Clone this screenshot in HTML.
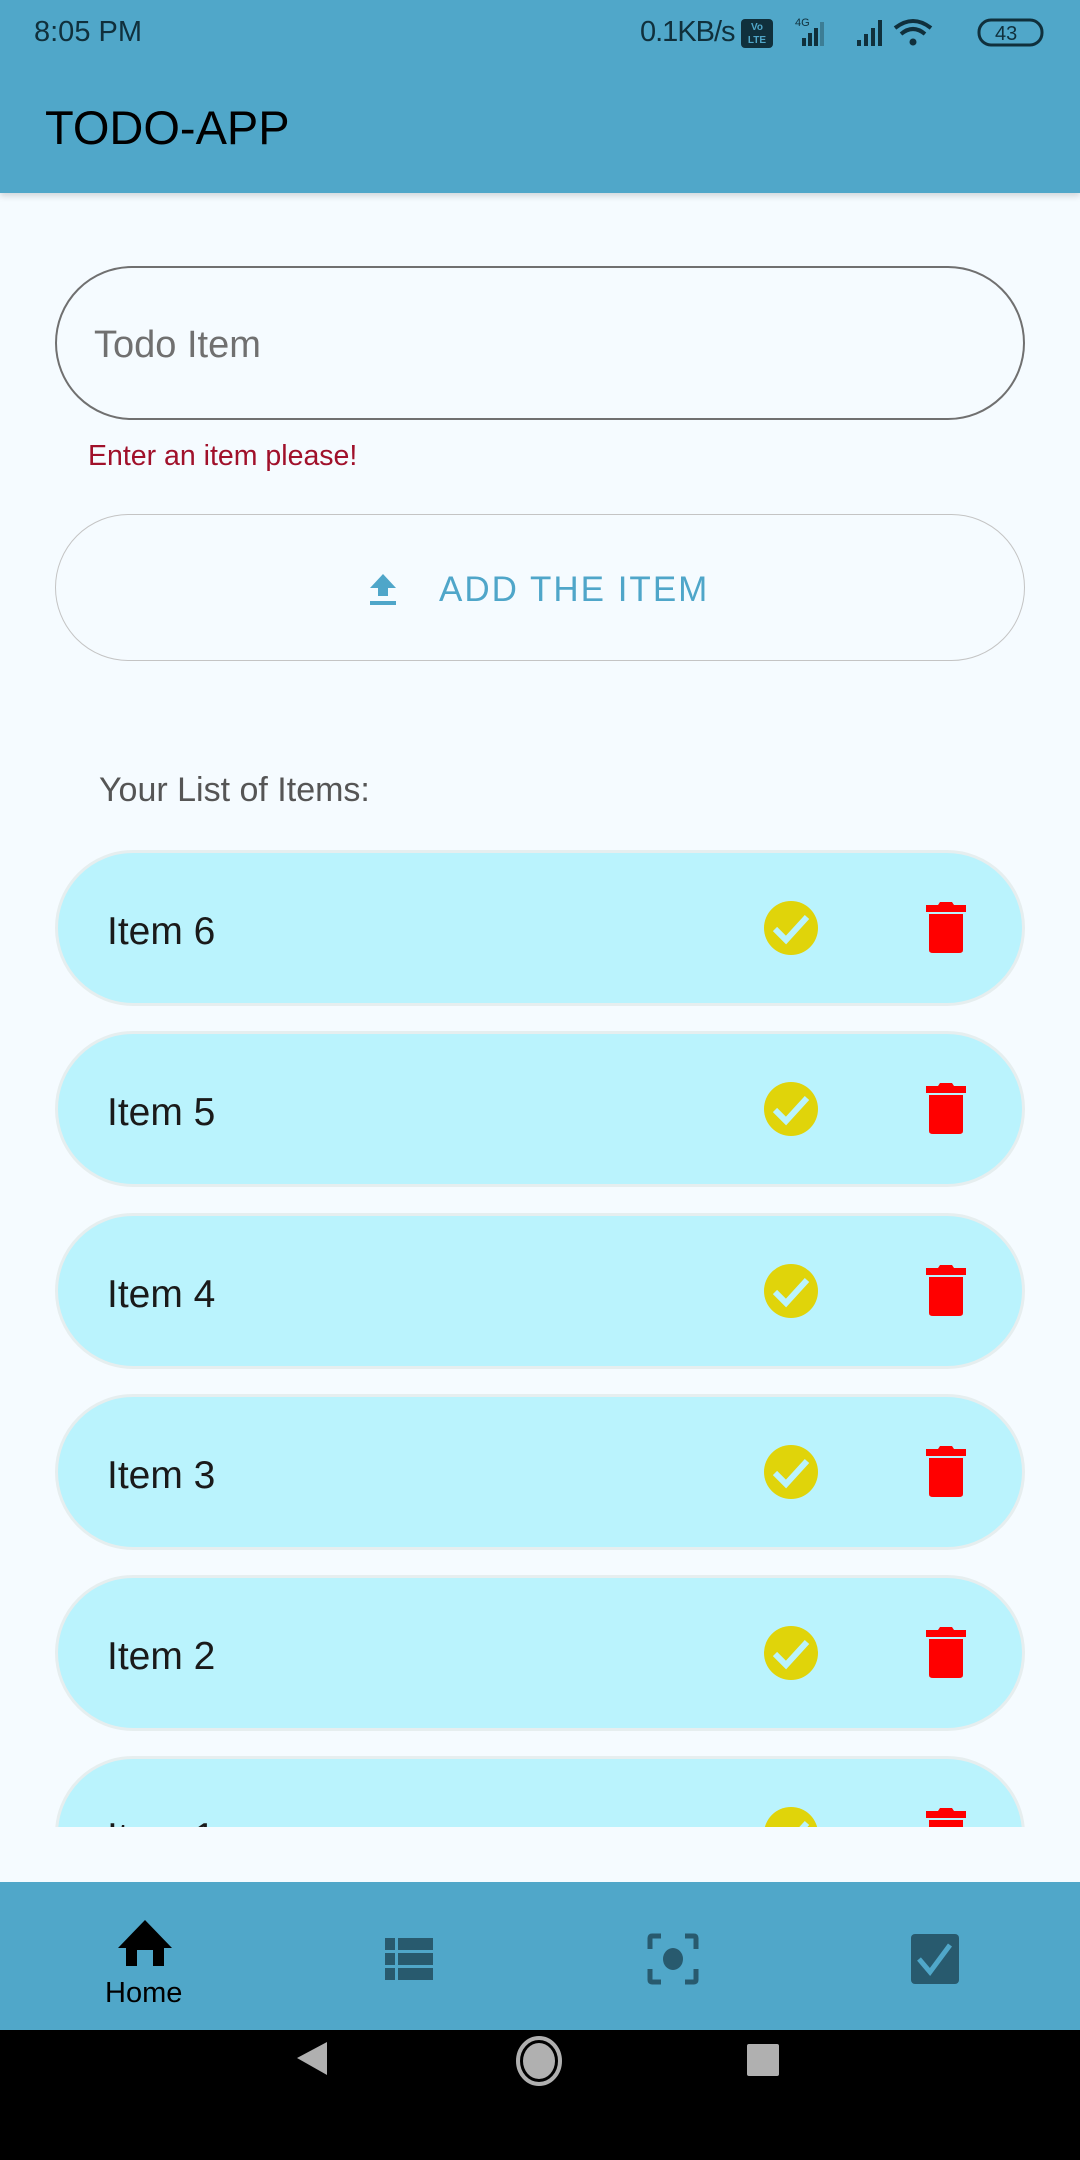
<!DOCTYPE html>
<html><head><meta charset="utf-8"><style>
*{margin:0;padding:0;box-sizing:border-box}
body{width:1080px;height:2160px;position:relative;background:#f5fbff;font-family:"Liberation Sans",sans-serif;overflow:hidden}
.abs{position:absolute}
.item{position:absolute;left:55px;width:970px;height:156px;background:#baf3fd;border:3px solid #e6eeef;border-radius:78px}
.item .t{position:absolute;left:49px;top:57px;font-size:39px;color:#1a1a1a}
.item svg{position:absolute}
</style></head><body>
<div class="abs" style="left:0;top:0;width:1080px;height:193px;background:#50a7c9;box-shadow:0 3px 6px rgba(0,0,0,.15)"></div>
<div class="abs" style="left:34px;top:16px;font-size:29px;color:#10303c">8:05 PM</div>
<div class="abs" style="left:640px;top:16px;font-size:29px;color:#10303c;letter-spacing:-1px">0.1KB/s</div>
<div class="abs" style="left:741px;top:19px;width:32px;height:29px;background:#10303c;border-radius:4px;color:#50a7c9;font-size:10px;font-weight:bold;text-align:center;line-height:13px;padding-top:2px">Vo<br>LTE</div>
<svg class="abs" style="left:785px;top:16px" width="300" height="34" viewBox="0 0 300 34">
<text x="10" y="10" font-size="11" fill="#10303c" font-family="Liberation Sans">4G</text>
<rect x="17" y="22" width="4" height="8" fill="#10303c"/><rect x="23" y="17" width="4" height="13" fill="#10303c"/><rect x="29" y="12" width="4" height="18" fill="#10303c"/><rect x="35" y="6" width="4" height="24" fill="#3c7d95"/>
<rect x="72" y="24" width="4" height="6" fill="#10303c"/><rect x="79" y="18" width="4" height="12" fill="#10303c"/><rect x="86" y="12" width="4" height="18" fill="#10303c"/><rect x="93" y="4" width="4" height="26" fill="#10303c"/>
<path d="M110 12 Q128 -2 146 12" stroke="#10303c" stroke-width="4" fill="none"/><path d="M116 18 Q128 8 140 18" stroke="#10303c" stroke-width="4" fill="none"/><circle cx="128" cy="26" r="3.5" fill="#10303c"/>
<rect x="194" y="4" width="63" height="25" rx="12" fill="none" stroke="#10303c" stroke-width="3"/>
<text x="210" y="24" font-size="20" fill="#10303c" font-family="Liberation Sans">43</text>
</svg>
<div class="abs" style="left:45px;top:100px;font-size:47px;color:#000">TODO-APP</div>

<div class="abs" style="left:55px;top:266px;width:970px;height:154px;border:2.5px solid #707070;border-radius:77px"></div>
<div class="abs" style="left:94px;top:324px;font-size:38px;color:#707070">Todo Item</div>
<div class="abs" style="left:88px;top:440px;font-size:28.5px;color:#a0102a">Enter an item please!</div>

<div class="abs" style="left:55px;top:514px;width:970px;height:147px;border:1.5px solid #c4c4c4;border-radius:74px"></div>
<svg class="abs" style="left:369px;top:574px" width="28" height="32" viewBox="0 0 28 32"><path d="M14 0 L27 14 H19 V22 H9 V14 H1 Z" fill="#4fa6c9"/><rect x="1" y="27" width="26" height="4" fill="#4fa6c9"/></svg>
<div class="abs" style="left:439px;top:570px;font-size:35px;color:#4fa6c9;letter-spacing:2px">ADD THE ITEM</div>

<div class="abs" style="left:99px;top:771px;font-size:34px;color:#555">Your List of Items:</div>

<div class="abs" style="left:0;top:830px;width:1080px;height:997px;overflow:hidden">
<div style="position:absolute;left:0;top:-830px;width:1080px;height:2200px">
<div class="item" style="top:850px"><div class="t">Item 6</div><svg style="left:705px;top:47px" width="56" height="56" viewBox="0 0 56 56"><circle cx="28" cy="28" r="27" fill="#e0d40a"/><path d="M12 29 L23 40 L44 17" stroke="#baf3fd" stroke-width="6" fill="none"/></svg><svg style="left:868px;top:49px" width="40" height="52" viewBox="0 0 40 52"><path d="M14 0 H26 L28 3 H40 V10 H0 V3 H12 Z" fill="#f00"/><path d="M3 12 H37 V48 Q37 51 33 51 H7 Q3 51 3 48 Z" fill="#f00"/></svg></div>
<div class="item" style="top:1031px"><div class="t">Item 5</div><svg style="left:705px;top:47px" width="56" height="56" viewBox="0 0 56 56"><circle cx="28" cy="28" r="27" fill="#e0d40a"/><path d="M12 29 L23 40 L44 17" stroke="#baf3fd" stroke-width="6" fill="none"/></svg><svg style="left:868px;top:49px" width="40" height="52" viewBox="0 0 40 52"><path d="M14 0 H26 L28 3 H40 V10 H0 V3 H12 Z" fill="#f00"/><path d="M3 12 H37 V48 Q37 51 33 51 H7 Q3 51 3 48 Z" fill="#f00"/></svg></div>
<div class="item" style="top:1213px"><div class="t">Item 4</div><svg style="left:705px;top:47px" width="56" height="56" viewBox="0 0 56 56"><circle cx="28" cy="28" r="27" fill="#e0d40a"/><path d="M12 29 L23 40 L44 17" stroke="#baf3fd" stroke-width="6" fill="none"/></svg><svg style="left:868px;top:49px" width="40" height="52" viewBox="0 0 40 52"><path d="M14 0 H26 L28 3 H40 V10 H0 V3 H12 Z" fill="#f00"/><path d="M3 12 H37 V48 Q37 51 33 51 H7 Q3 51 3 48 Z" fill="#f00"/></svg></div>
<div class="item" style="top:1394px"><div class="t">Item 3</div><svg style="left:705px;top:47px" width="56" height="56" viewBox="0 0 56 56"><circle cx="28" cy="28" r="27" fill="#e0d40a"/><path d="M12 29 L23 40 L44 17" stroke="#baf3fd" stroke-width="6" fill="none"/></svg><svg style="left:868px;top:49px" width="40" height="52" viewBox="0 0 40 52"><path d="M14 0 H26 L28 3 H40 V10 H0 V3 H12 Z" fill="#f00"/><path d="M3 12 H37 V48 Q37 51 33 51 H7 Q3 51 3 48 Z" fill="#f00"/></svg></div>
<div class="item" style="top:1575px"><div class="t">Item 2</div><svg style="left:705px;top:47px" width="56" height="56" viewBox="0 0 56 56"><circle cx="28" cy="28" r="27" fill="#e0d40a"/><path d="M12 29 L23 40 L44 17" stroke="#baf3fd" stroke-width="6" fill="none"/></svg><svg style="left:868px;top:49px" width="40" height="52" viewBox="0 0 40 52"><path d="M14 0 H26 L28 3 H40 V10 H0 V3 H12 Z" fill="#f00"/><path d="M3 12 H37 V48 Q37 51 33 51 H7 Q3 51 3 48 Z" fill="#f00"/></svg></div>
<div class="item" style="top:1756px"><div class="t">Item 1</div><svg style="left:705px;top:47px" width="56" height="56" viewBox="0 0 56 56"><circle cx="28" cy="28" r="27" fill="#e0d40a"/><path d="M12 29 L23 40 L44 17" stroke="#baf3fd" stroke-width="6" fill="none"/></svg><svg style="left:868px;top:49px" width="40" height="52" viewBox="0 0 40 52"><path d="M14 0 H26 L28 3 H40 V10 H0 V3 H12 Z" fill="#f00"/><path d="M3 12 H37 V48 Q37 51 33 51 H7 Q3 51 3 48 Z" fill="#f00"/></svg></div>
</div></div>

<div class="abs" style="left:0;top:1882px;width:1080px;height:148px;background:#50a7c9"></div>
<svg class="abs" style="left:117px;top:1920px" width="56" height="46" viewBox="0 0 56 46"><path d="M28 0 L55 28 H47 V46 H36 V30 H20 V46 H9 V28 H1 Z" fill="#000"/></svg>
<div class="abs" style="left:105px;top:1977px;font-size:29px;color:#000">Home</div>
<svg class="abs" style="left:385px;top:1938px" width="48" height="42" viewBox="0 0 48 42"><g fill="#285a6e"><rect x="0" y="0" width="10" height="12"/><rect x="13" y="0" width="35" height="12"/><rect x="0" y="15" width="10" height="12"/><rect x="13" y="15" width="35" height="12"/><rect x="0" y="30" width="10" height="12"/><rect x="13" y="30" width="35" height="12"/></g></svg>
<svg class="abs" style="left:647px;top:1933px" width="52" height="52" viewBox="0 0 52 52"><g stroke="#285a6e" stroke-width="5" fill="none"><path d="M3 16 V5 Q3 3 5 3 H14"/><path d="M38 3 H47 Q49 3 49 5 V16"/><path d="M49 36 V47 Q49 49 47 49 H38"/><path d="M14 49 H5 Q3 49 3 47 V36"/></g><ellipse cx="26" cy="26" rx="10" ry="11" fill="#285a6e"/></svg>
<svg class="abs" style="left:910px;top:1933px" width="50" height="52" viewBox="0 0 50 52"><rect x="1" y="1" width="48" height="50" rx="4" fill="#285a6e"/><path d="M9 26 L20 39 L40 12" stroke="#50a7c9" stroke-width="5" fill="none"/></svg>

<div class="abs" style="left:0;top:2030px;width:1080px;height:130px;background:#000"></div>
<svg class="abs" style="left:295px;top:2035px" width="490" height="60" viewBox="0 0 490 60"><path d="M32 7 V40 L2 23 Z" fill="#b0b0b0"/><ellipse cx="244" cy="26" rx="21" ry="23" fill="none" stroke="#b0b0b0" stroke-width="4"/><ellipse cx="244" cy="26" rx="16" ry="18" fill="#b0b0b0"/><rect x="452" y="9" width="32" height="32" rx="2" fill="#b0b0b0"/></svg>
</body></html>
